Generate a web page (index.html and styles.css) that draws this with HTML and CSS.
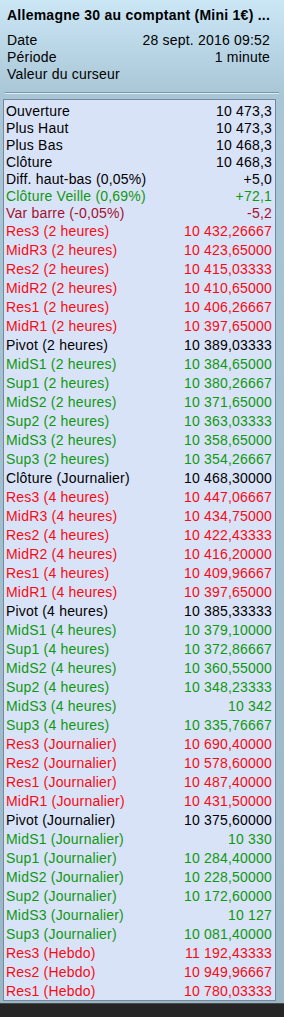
FILE: index.html
```html
<!DOCTYPE html>
<html lang="fr">
<head>
<meta charset="utf-8">
<title>Allemagne 30</title>
<link rel="stylesheet" href="styles.css">
</head>
<body>
<div class="window">
  <header class="head">
    <div class="title">Allemagne 30 au comptant (Mini 1€) ...</div>
    <div class="meta">
      <div class="mrow"><span>Date</span><span>28 sept. 2016 09:52</span></div>
      <div class="mrow"><span>Période</span><span>1 minute</span></div>
      <div class="mrow"><span>Valeur du curseur</span><span></span></div>
    </div>
  </header>
  <div class="sep"></div>
  <section class="panel">
    <div class="row top"><span>Ouverture</span><span>10 473,3</span></div>
    <div class="row top"><span>Plus Haut</span><span>10 473,3</span></div>
    <div class="row top"><span>Plus Bas</span><span>10 468,3</span></div>
    <div class="row top"><span>Clôture</span><span>10 468,3</span></div>
    <div class="row top"><span>Diff. haut-bas (0,05%)</span><span>+5,0</span></div>
    <div class="row top green"><span>Clôture Veille (0,69%)</span><span>+72,1</span></div>
    <div class="row top dark"><span>Var barre (-0,05%)</span><span>-5,2</span></div>

    <div class="row red"><span>Res3 (2 heures)</span><span>10 432,26667</span></div>
    <div class="row red"><span>MidR3 (2 heures)</span><span>10 423,65000</span></div>
    <div class="row red"><span>Res2 (2 heures)</span><span>10 415,03333</span></div>
    <div class="row red"><span>MidR2 (2 heures)</span><span>10 410,65000</span></div>
    <div class="row red"><span>Res1 (2 heures)</span><span>10 406,26667</span></div>
    <div class="row red"><span>MidR1 (2 heures)</span><span>10 397,65000</span></div>
    <div class="row"><span>Pivot (2 heures)</span><span>10 389,03333</span></div>
    <div class="row green"><span>MidS1 (2 heures)</span><span>10 384,65000</span></div>
    <div class="row green"><span>Sup1 (2 heures)</span><span>10 380,26667</span></div>
    <div class="row green"><span>MidS2 (2 heures)</span><span>10 371,65000</span></div>
    <div class="row green"><span>Sup2 (2 heures)</span><span>10 363,03333</span></div>
    <div class="row green"><span>MidS3 (2 heures)</span><span>10 358,65000</span></div>
    <div class="row green"><span>Sup3 (2 heures)</span><span>10 354,26667</span></div>
    <div class="row"><span>Clôture (Journalier)</span><span>10 468,30000</span></div>

    <div class="row red"><span>Res3 (4 heures)</span><span>10 447,06667</span></div>
    <div class="row red"><span>MidR3 (4 heures)</span><span>10 434,75000</span></div>
    <div class="row red"><span>Res2 (4 heures)</span><span>10 422,43333</span></div>
    <div class="row red"><span>MidR2 (4 heures)</span><span>10 416,20000</span></div>
    <div class="row red"><span>Res1 (4 heures)</span><span>10 409,96667</span></div>
    <div class="row red"><span>MidR1 (4 heures)</span><span>10 397,65000</span></div>
    <div class="row"><span>Pivot (4 heures)</span><span>10 385,33333</span></div>
    <div class="row green"><span>MidS1 (4 heures)</span><span>10 379,10000</span></div>
    <div class="row green"><span>Sup1 (4 heures)</span><span>10 372,86667</span></div>
    <div class="row green"><span>MidS2 (4 heures)</span><span>10 360,55000</span></div>
    <div class="row green"><span>Sup2 (4 heures)</span><span>10 348,23333</span></div>
    <div class="row green"><span>MidS3 (4 heures)</span><span>10 342</span></div>
    <div class="row green"><span>Sup3 (4 heures)</span><span>10 335,76667</span></div>

    <div class="row red"><span>Res3 (Journalier)</span><span>10 690,40000</span></div>
    <div class="row red"><span>Res2 (Journalier)</span><span>10 578,60000</span></div>
    <div class="row red"><span>Res1 (Journalier)</span><span>10 487,40000</span></div>
    <div class="row red"><span>MidR1 (Journalier)</span><span>10 431,50000</span></div>
    <div class="row"><span>Pivot (Journalier)</span><span>10 375,60000</span></div>
    <div class="row green"><span>MidS1 (Journalier)</span><span>10 330</span></div>
    <div class="row green"><span>Sup1 (Journalier)</span><span>10 284,40000</span></div>
    <div class="row green"><span>MidS2 (Journalier)</span><span>10 228,50000</span></div>
    <div class="row green"><span>Sup2 (Journalier)</span><span>10 172,60000</span></div>
    <div class="row green"><span>MidS3 (Journalier)</span><span>10 127</span></div>
    <div class="row green"><span>Sup3 (Journalier)</span><span>10 081,40000</span></div>

    <div class="row red"><span>Res3 (Hebdo)</span><span>11 192,43333</span></div>
    <div class="row red"><span>Res2 (Hebdo)</span><span>10 949,96667</span></div>
    <div class="row red"><span>Res1 (Hebdo)</span><span>10 780,03333</span></div>
  </section>
  <div class="spacer"></div>
  <footer class="foot"></footer>
</div>
</body>
</html>
```
FILE: styles.css
```css
html, body {
  margin: 0;
  padding: 0;
}
body {
  width: 284px;
  height: 1017px;
  overflow: hidden;
  font-family: "Liberation Sans", Arial, sans-serif;
  font-size: 14px;
  letter-spacing: 0.2px;
  color: #000;
}
.window {
  display: flex;
  flex-direction: column;
  height: 1017px;
  background: linear-gradient(to bottom, #cbe7f6 0px, #a9c6d6 95px, #9bb7c7 1003px);
}
.head {
  padding: 7px 14px 0 7px;
}
.title {
  font-weight: bold;
  font-size: 14px;
  letter-spacing: 0.25px;
  line-height: 17px;
  white-space: nowrap;
  color: #000;
}
.meta {
  margin-top: 8px;
}
.mrow {
  display: flex;
  justify-content: space-between;
  line-height: 17px;
  height: 17px;
}
.sep {
  margin: 9px 5px 0 5px;
  height: 1px;
  background: #7d97a7;
  border-bottom: 1px solid #dcecf5;
}
.panel {
  margin: 5px 8px 0 3px;
  border: 1px solid #74899a;
  background: #d9e3f8;
  padding: 2px 3px 0 2px;
}
.row {
  display: flex;
  justify-content: space-between;
  height: 19px;
  box-sizing: border-box;
  padding-top: 2px;
  line-height: 17px;
  white-space: nowrap;
}
.row.top {
  height: 17px;
  padding-top: 1px;
  line-height: 16px;
}
.red { color: #f80a12; }
.green { color: #109810; }
.dark { color: #a2102e; }
.spacer {
  height: 2px;
}
.foot {
  flex: 1;
  background: #252525;
  border-top: 1px solid #4a4a4a;
}
```
